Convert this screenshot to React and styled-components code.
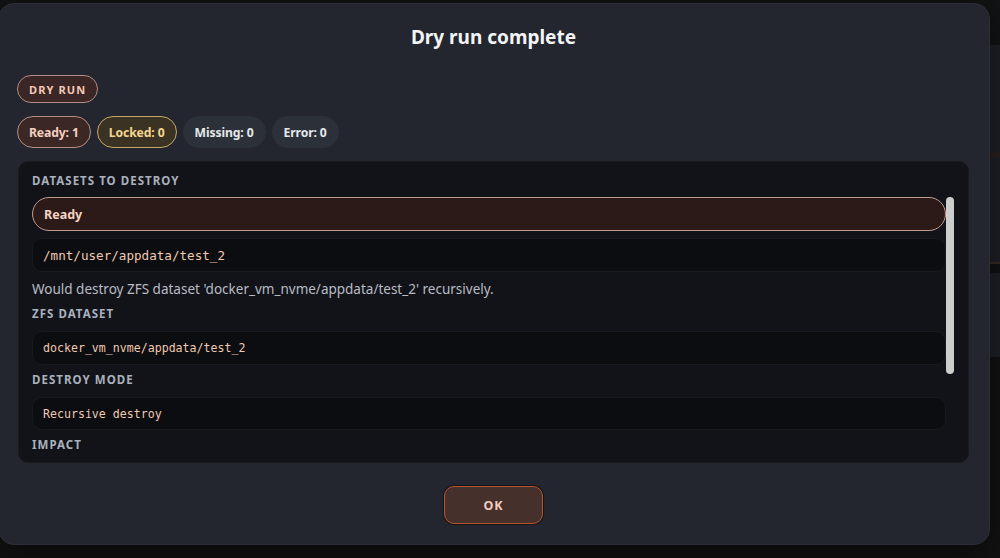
import styled, { createGlobalStyle } from "styled-components";

const GlobalStyle = createGlobalStyle`
  html, body {
    margin: 0;
    padding: 0;
    background: #121315;
    font-family: "Noto Sans", "Open Sans", sans-serif;
    overflow: hidden;
  }
`;

const Screen = styled.div`
  position: relative;
  width: 1000px;
  height: 558px;
  overflow: hidden;
`;

const BackPage = styled.div`
  display: flex;
  flex-direction: column;
  width: 100%;
  height: 100%;
`;

const Band = styled.div`
  height: ${(p) => p.h}px;
  background: ${(p) => p.bg};
  flex-shrink: 0;
`;

const Modal = styled.div`
  position: absolute;
  left: -2px;
  top: 3px;
  width: 992px;
  height: 542px;
  box-sizing: border-box;
  padding: 19px 20px 20px 19px;
  background: #23262e;
  border: 1px solid #2b2e36;
  border-radius: 16px;
  display: flex;
  flex-direction: column;
  box-shadow: 0 10px 40px rgba(0, 0, 0, 0.5);
`;

const Title = styled.h2`
  margin: 0;
  text-align: center;
  font-size: 19px;
  line-height: 28px;
  font-weight: 700;
  color: #f3f4f6;
`;

const Badge = styled.span`
  align-self: flex-start;
  margin: 24px 0 0 -1px;
  height: 28px;
  box-sizing: border-box;
  padding: 0 11px;
  display: inline-flex;
  align-items: center;
  border-radius: 14px;
  background: #3a2624;
  border: 1px solid #b58e84;
  color: #f4c9b9;
  font-size: 11px;
  font-weight: 700;
  letter-spacing: 0.1em;
`;

const ChipRow = styled.div`
  display: flex;
  gap: 6px;
  margin: 13px 0 0 -1px;
`;

const chipTones = {
  ready: { bg: "#3b2825", border: "#b58e84", color: "#f4cfc0" },
  locked: { bg: "#3a3324", border: "#c7a66b", color: "#f5d590" },
  plain: { bg: "#2c3038", border: "#2c3038", color: "#e6e8ec" },
};

const Chip = styled.span`
  height: 32px;
  box-sizing: border-box;
  padding: 0 11px;
  display: inline-flex;
  align-items: center;
  border-radius: 16px;
  background: ${(p) => chipTones[p.tone].bg};
  border: 1px solid ${(p) => chipTones[p.tone].border};
  color: ${(p) => chipTones[p.tone].color};
  font-size: 12.2px;
  font-weight: 700;
  letter-spacing: -0.01em;
`;

const Panel = styled.div`
  margin-top: 13px;
  height: 302px;
  box-sizing: border-box;
  padding: 11px 14px 0 13px;
  background: #121318;
  border: 1px solid #191b21;
  border-radius: 10px;
  display: flex;
  flex-direction: column;
  overflow: hidden;
`;

const Label = styled.div`
  font-size: 11.5px;
  line-height: 16px;
  font-weight: 700;
  letter-spacing: 0.09em;
  color: #a9b1bd;
  text-transform: uppercase;
  margin-bottom: ${(p) => p.gap || 0}px;
`;

const ScrollArea = styled.div`
  flex: 1;
  min-height: 0;
  margin-top: 8px;
  display: flex;
  overflow: hidden;
`;

const ScrollContent = styled.div`
  flex: 1;
  min-width: 0;
  display: flex;
  flex-direction: column;
  gap: 7px;
`;

const ScrollTrack = styled.div`
  width: 8px;
  flex-shrink: 0;
`;

const ScrollThumb = styled.div`
  height: 177px;
  border-radius: 4px;
  background: #cdcdcd;
`;

const StatusRow = styled.div`
  flex-shrink: 0;
  height: 34px;
  box-sizing: border-box;
  padding: 0 11px;
  display: flex;
  align-items: center;
  border-radius: 17px;
  background: #2b1a17;
  border: 1px solid #c09c8d;
  color: #f7d3c3;
  font-size: 12.5px;
  font-weight: 700;
`;

const ValueBox = styled.div`
  flex-shrink: 0;
  height: ${(p) => p.h || 34}px;
  box-sizing: border-box;
  padding: 0 10px;
  display: flex;
  align-items: center;
  border-radius: 10px;
  background: #0c0d10;
  border: 1px solid #181a1f;
  color: #f0c9b2;
  font-family: "DejaVu Sans Mono", "Liberation Mono", monospace;
  font-size: ${(p) => p.size || 11.6}px;
`;

const Note = styled.div`
  flex-shrink: 0;
  margin: 2px 0;
  font-size: 13.5px;
  line-height: 16px;
  color: #b8bcc4;
`;

const Field = styled.div`
  flex-shrink: 0;
  display: flex;
  flex-direction: column;
`;

const Footer = styled.div`
  flex: 1;
  display: flex;
  justify-content: center;
  align-items: flex-start;
  padding-top: 23px;
`;

const OkButton = styled.button`
  width: 99px;
  height: 38px;
  border-radius: 10px;
  background: #46302b;
  border: 1.5px solid #b4572f;
  box-shadow: 0 0 0 1px rgba(0, 0, 0, 0.45);
  color: #f4cbbb;
  font-family: "Noto Sans", sans-serif;
  font-size: 12.5px;
  font-weight: 700;
  letter-spacing: 0.08em;
  cursor: pointer;
`;

const bands = [
  { h: 45, bg: "#121315" },
  { h: 107, bg: "#1d2026" },
  { h: 5, bg: "#2a201d" },
  { h: 105, bg: "#1d2026" },
  { h: 2, bg: "#3a2a24" },
  { h: 9, bg: "#111214" },
  { h: 84, bg: "#1d2026" },
  { h: 201, bg: "#121212" },
];

const counts = [
  { tone: "ready", text: "Ready: 1" },
  { tone: "locked", text: "Locked: 0" },
  { tone: "plain", text: "Missing: 0" },
  { tone: "plain", text: "Error: 0" },
];

export default function App() {
  return (
    <Screen>
      <GlobalStyle />
      <BackPage>
        {bands.map((b, i) => (
          <Band key={i} h={b.h} bg={b.bg} />
        ))}
      </BackPage>

      <Modal>
        <Title>Dry run complete</Title>
        <Badge>DRY RUN</Badge>
        <ChipRow>
          {counts.map((c) => (
            <Chip key={c.text} tone={c.tone}>
              {c.text}
            </Chip>
          ))}
        </ChipRow>

        <Panel>
          <Label>Datasets to destroy</Label>
          <ScrollArea>
            <ScrollContent>
              <StatusRow>Ready</StatusRow>
              <ValueBox size={12.6}>/mnt/user/appdata/test_2</ValueBox>
              <Note>
                Would destroy ZFS dataset 'docker_vm_nvme/appdata/test_2'
                recursively.
              </Note>
              <Field>
                <Label gap={9}>ZFS dataset</Label>
                <ValueBox>docker_vm_nvme/appdata/test_2</ValueBox>
              </Field>
              <Field>
                <Label gap={9}>Destroy mode</Label>
                <ValueBox h={33}>Recursive destroy</ValueBox>
              </Field>
              <Field>
                <Label gap={9}>Impact</Label>
                <ValueBox>Dataset, child datasets and all snapshots</ValueBox>
              </Field>
            </ScrollContent>
            <ScrollTrack>
              <ScrollThumb />
            </ScrollTrack>
          </ScrollArea>
        </Panel>

        <Footer>
          <OkButton>OK</OkButton>
        </Footer>
      </Modal>
    </Screen>
  );
}
